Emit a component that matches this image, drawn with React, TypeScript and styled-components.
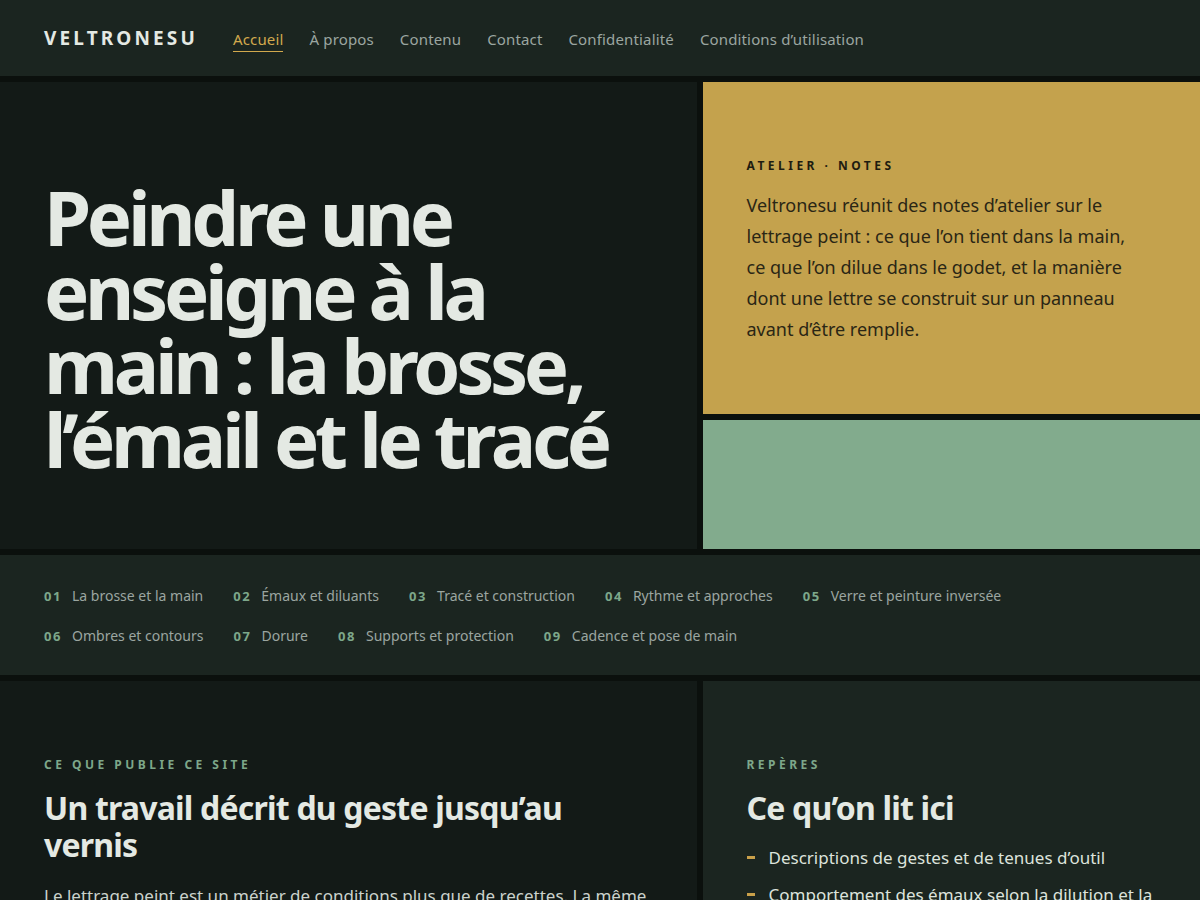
import React from 'react'
import styled, { createGlobalStyle } from 'styled-components'

const GlobalStyle = createGlobalStyle`
  * {
    box-sizing: border-box;
  }

  body {
    margin: 0;
    background: #0b100d;
    font-family: 'Noto Sans', 'Open Sans', sans-serif;
    color: #e4e9e3;
  }

  h1, h2, p, ul {
    margin: 0;
  }
`

const Page = styled.div`
  display: grid;
  gap: 6px;
`

const Header = styled.header`
  height: 76px;
  padding: 0 44px;
  background: #1b2520;
  display: flex;
  align-items: center;
  gap: 35px;
`

const Logo = styled.a`
  font-size: 19px;
  font-weight: 700;
  letter-spacing: 0.165em;
  color: #e4e9e3;
  text-decoration: none;
`

const Nav = styled.nav`
  display: flex;
  align-items: center;
  gap: 26px;
`

const NavLink = styled.a<{ $active?: boolean }>`
  font-size: 15px;
  letter-spacing: 0.01em;
  text-decoration: none;
  color: ${(props) => (props.$active ? '#d2a94d' : '#9ba6a0')};
  padding: 5px 0 2px;
  border-bottom: 1px solid ${(props) => (props.$active ? '#d2a94d' : 'transparent')};
`

const Split = styled.section`
  display: grid;
  grid-template-columns: 7fr 5fr;
  gap: 6px;
`

const HeroMain = styled.div`
  background: #131a17;
  padding: 0 44px 73px;
  display: flex;
  flex-direction: column;
  justify-content: flex-end;
`

const Title = styled.h1`
  font-size: 76px;
  line-height: 74px;
  font-weight: 700;
  letter-spacing: -0.057em;
  color: #e4e9e3;
`

const HeroSide = styled.div`
  display: flex;
  flex-direction: column;
  gap: 6px;
`

const NoteCard = styled.div`
  background: #c4a24d;
  padding: 75px 44px 69px;
`

const Eyebrow = styled.div<{ $tone: 'dark' | 'green' }>`
  font-size: 12px;
  line-height: 18px;
  font-weight: 700;
  letter-spacing: 0.29em;
  text-transform: uppercase;
  color: ${(props) => (props.$tone === 'dark' ? '#1e1c10' : '#7da78a')};
`

const NoteText = styled.p`
  margin-top: 15px;
  max-width: 390px;
  font-size: 18px;
  line-height: 31px;
  color: #2a2615;
`

const Swatch = styled.div`
  flex: 1;
  min-height: 129px;
  background: #82ab8d;
`

const Toc = styled.nav`
  background: #1b2520;
  padding: 30px 44px 28px;
  display: flex;
  flex-wrap: wrap;
  column-gap: 30px;
  row-gap: 18px;
`

const TocItem = styled.a`
  display: flex;
  align-items: baseline;
  gap: 10px;
  line-height: 22px;
  text-decoration: none;
`

const TocNum = styled.span`
  font-size: 13px;
  font-weight: 700;
  letter-spacing: 0.12em;
  color: #7da78a;
`

const TocLabel = styled.span`
  font-size: 14px;
  color: #9ba6a0;
`

const Panel = styled.div<{ $tone: 'deep' | 'soft' }>`
  background: ${(props) => (props.$tone === 'deep' ? '#131a17' : '#1b2520')};
  padding: 75px 44px 60px;
`

const SectionTitle = styled.h2`
  margin-top: 15px;
  font-size: 32px;
  line-height: 37px;
  font-weight: 700;
  letter-spacing: -0.025em;
  color: #e4e9e3;
`

const BodyText = styled.p`
  margin-top: 18px;
  font-size: 17px;
  line-height: 29px;
  color: #cbd2cc;
`

const List = styled.ul`
  margin-top: 18px;
  padding: 0;
  list-style: none;
  display: flex;
  flex-direction: column;
  gap: 10px;
`

const ListItem = styled.li`
  display: flex;
  gap: 14px;
  font-size: 17px;
  line-height: 27px;
  color: #dde3dc;

  &::before {
    content: '';
    flex-shrink: 0;
    width: 8px;
    height: 3px;
    margin-top: 12px;
    background: #c9a04a;
  }
`

const navItems = [
  'Accueil',
  'À propos',
  'Contenu',
  'Contact',
  'Confidentialité',
  'Conditions d’utilisation',
]

const chapters = [
  'La brosse et la main',
  'Émaux et diluants',
  'Tracé et construction',
  'Rythme et approches',
  'Verre et peinture inversée',
  'Ombres et contours',
  'Dorure',
  'Supports et protection',
  'Cadence et pose de main',
]

const landmarks = [
  'Descriptions de gestes et de tenues d’outil',
  'Comportement des émaux selon la dilution et la température',
  'Méthodes de tracé et de construction des lettres',
  'Conseils de protection et de vernissage des panneaux',
]

export default function App() {
  return (
    <>
      <GlobalStyle />
      <Page>
        <Header>
          <Logo href="#">VELTRONESU</Logo>
          <Nav>
            {navItems.map((item, i) => (
              <NavLink key={item} href="#" $active={i === 0}>
                {item}
              </NavLink>
            ))}
          </Nav>
        </Header>

        <Split>
          <HeroMain>
            <Title>
              Peindre une enseigne à la main : la brosse, l’émail et le tracé
            </Title>
          </HeroMain>
          <HeroSide>
            <NoteCard>
              <Eyebrow $tone="dark">Atelier · Notes</Eyebrow>
              <NoteText>
                Veltronesu réunit des notes d’atelier sur le lettrage peint : ce que l’on tient
                dans la main, ce que l’on dilue dans le godet, et la manière dont une lettre se
                construit sur un panneau avant d’être remplie.
              </NoteText>
            </NoteCard>
            <Swatch />
          </HeroSide>
        </Split>

        <Toc>
          {chapters.map((chapter, i) => (
            <TocItem key={chapter} href="#">
              <TocNum>{String(i + 1).padStart(2, '0')}</TocNum>
              <TocLabel>{chapter}</TocLabel>
            </TocItem>
          ))}
        </Toc>

        <Split>
          <Panel $tone="deep">
            <Eyebrow $tone="green">Ce que publie ce site</Eyebrow>
            <SectionTitle>Un travail décrit du geste jusqu’au vernis</SectionTitle>
            <BodyText>
              Le lettrage peint est un métier de conditions plus que de recettes. La même
              brosse ne se comporte pas de la même façon selon l’émail, la température de
              l’atelier et la surface du support.
            </BodyText>
          </Panel>
          <Panel $tone="soft">
            <Eyebrow $tone="green">Repères</Eyebrow>
            <SectionTitle>Ce qu’on lit ici</SectionTitle>
            <List>
              {landmarks.map((item) => (
                <ListItem key={item}>{item}</ListItem>
              ))}
            </List>
          </Panel>
        </Split>
      </Page>
    </>
  )
}
